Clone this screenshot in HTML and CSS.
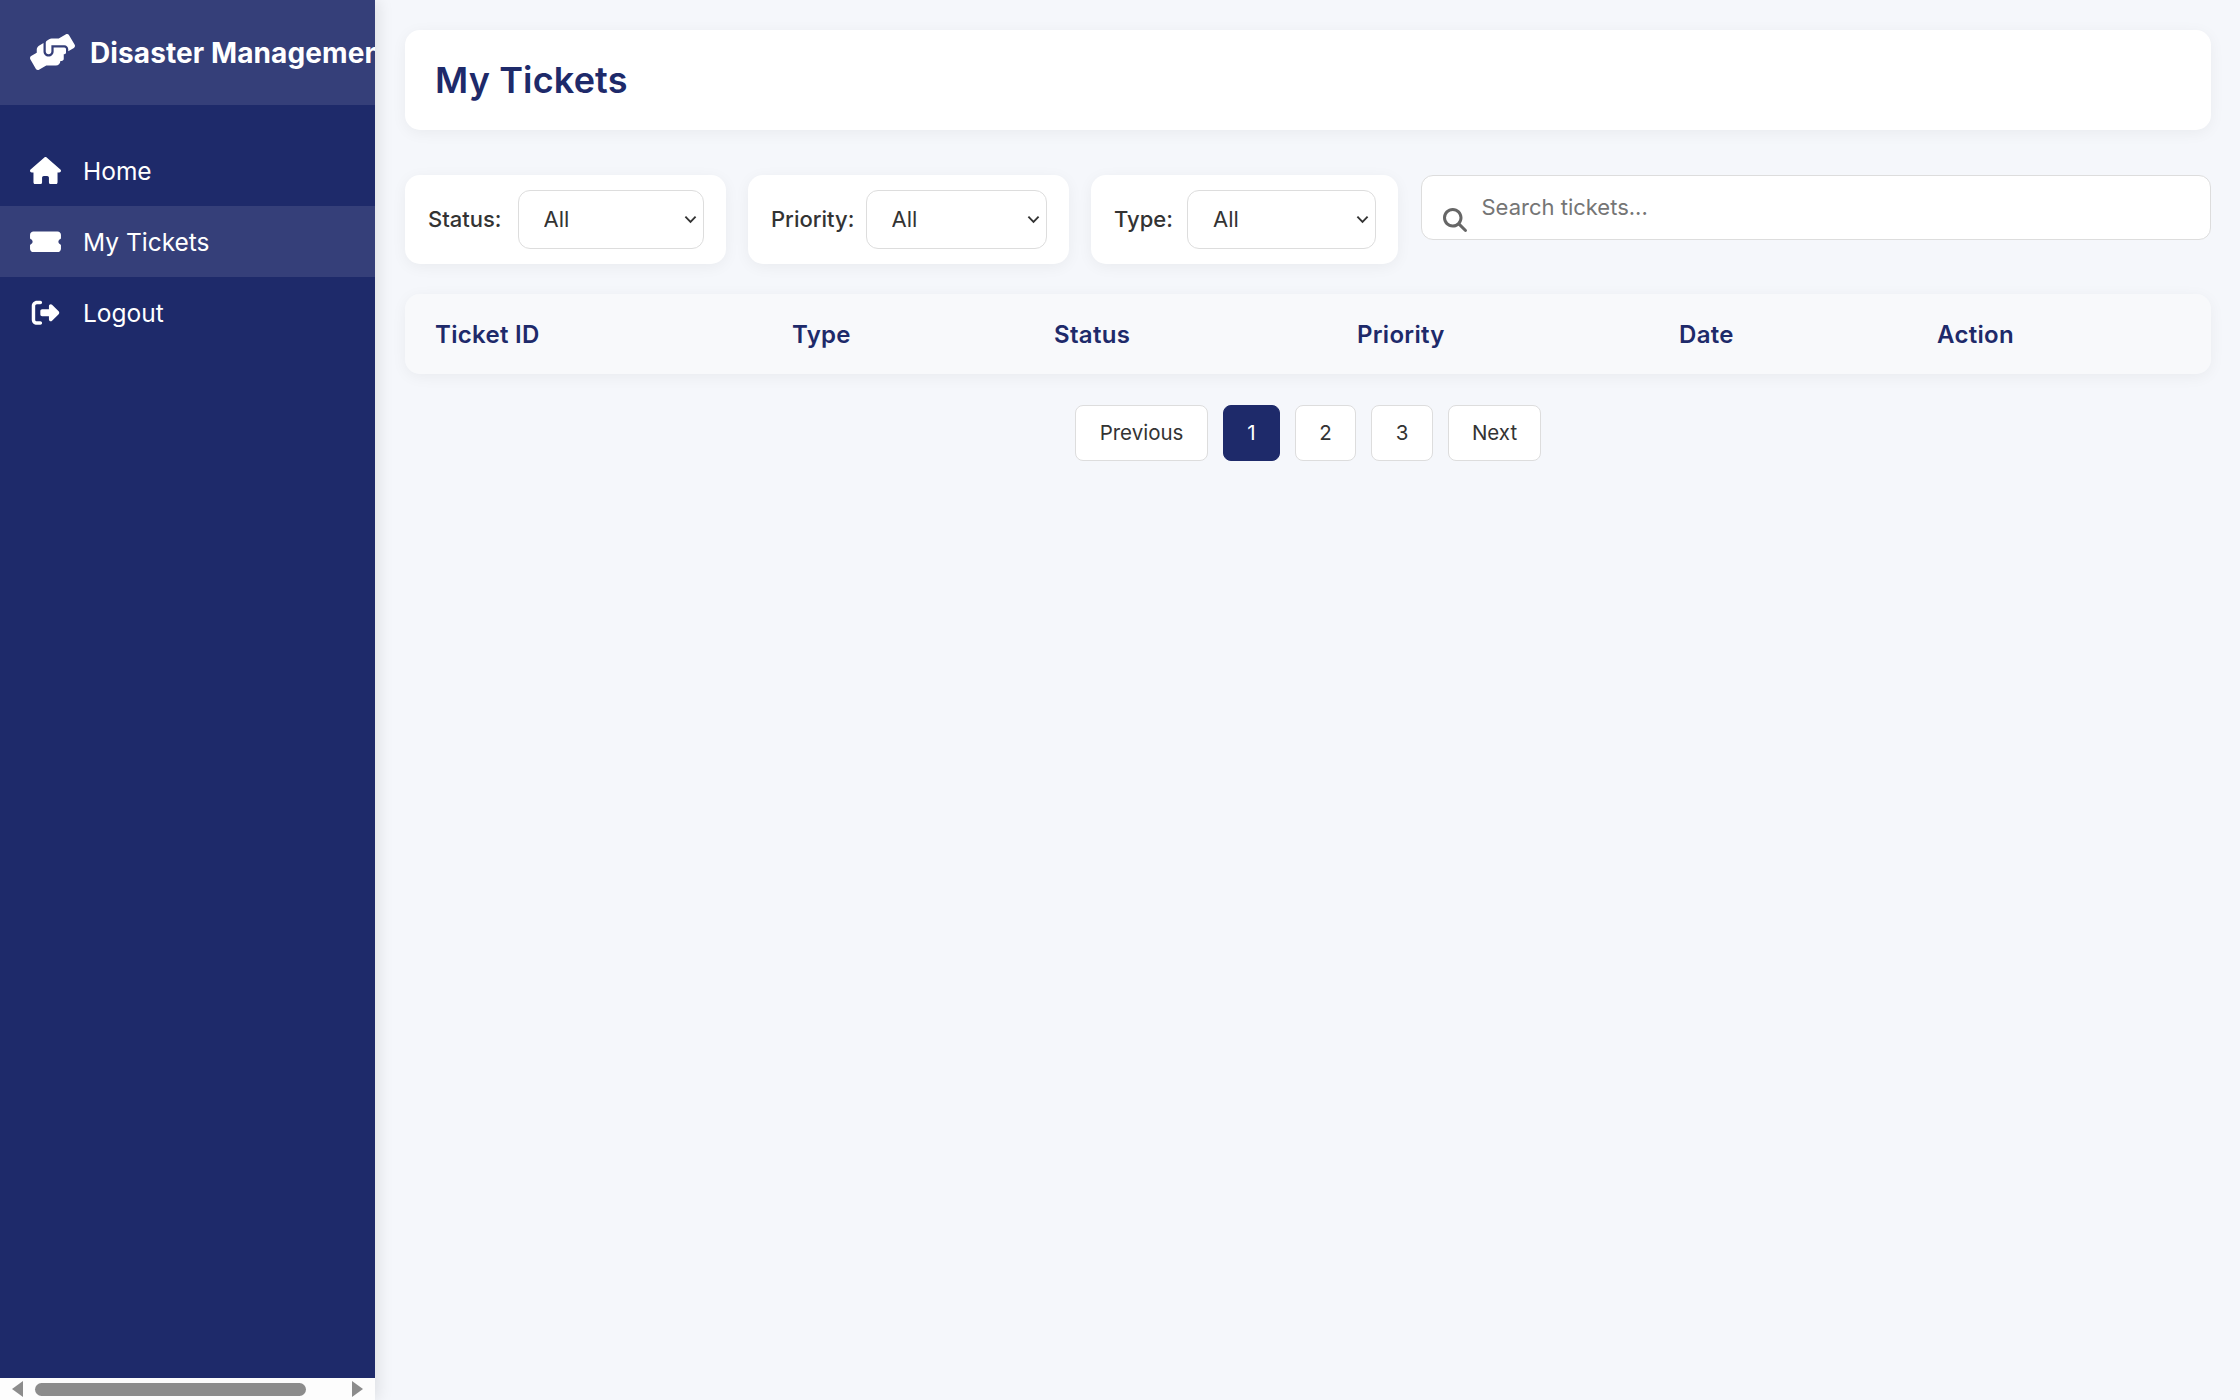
FILE: index.html
```html
<!DOCTYPE html>
<html lang="en">
<head>
<meta charset="utf-8">
<title>My Tickets</title>
<link rel="stylesheet" href="styles.css">
</head>
<body>
<div class="app">
  <aside class="sidebar">
    <div class="brand">
      <svg class="brand-icon" viewBox="0 0 640 512" aria-hidden="true"><path d="M488 192H336v56c0 39.7-32.3 72-72 72s-72-32.3-72-72V126.4l-64.9 39C107.8 176.9 96 197.8 96 220.2v47.3l-80 46.2C.7 322.5-4.6 342.1 4.3 357.4l80 138.6c8.8 15.3 28.4 20.5 43.7 11.7L231.4 448H368c35.3 0 64-28.7 64-64h16c17.7 0 32-14.3 32-32v-64h8c13.3 0 24-10.7 24-24v-48c0-13.3-10.7-24-24-24zm147.7-37.4L555.7 16C546.9.7 527.3-4.5 512 4.3L408.6 64H306.4c-12 0-23.7 3.4-33.9 9.7L239 94.6c-9.4 5.8-15 16.1-15 27.1V248c0 22.1 17.9 40 40 40s40-17.9 40-40v-88h184c30.9 0 56 25.1 56 56v28.5l80-46.2c15.3-8.9 20.5-28.4 11.7-43.7z"/></svg>
      <span class="brand-name">Disaster Management</span>
    </div>
    <nav class="nav">
      <a class="nav-item" href="#">
        <svg class="nav-icon" viewBox="0 0 576 512" aria-hidden="true"><path d="M575.8 255.5c0 18-15 32.1-32 32.1h-32l.7 160.2c0 2.7-.2 5.4-.5 8.1V472c0 22.1-17.9 40-40 40H456c-1.1 0-2.2 0-3.3-.1c-1.4 .1-2.8 .1-4.2 .1H416 392c-22.1 0-40-17.9-40-40V448 384c0-17.7-14.3-32-32-32H256c-17.7 0-32 14.3-32 32v64 24c0 22.1-17.9 40-40 40H160 128.1c-1.5 0-3-.1-4.5-.2c-1.2 .1-2.4 .2-3.6 .2H104c-22.1 0-40-17.9-40-40V360c0-.9 0-1.9 .1-2.8V287.6H32c-18 0-32-14-32-32.1c0-9 3-17 10-24L266.4 8c7-7 15-8 22-8s15 2 21 7L564.8 231.5c8 7 12 15 11 24z"/></svg>
        <span>Home</span>
      </a>
      <a class="nav-item nav-item-active" href="#">
        <svg class="nav-icon" viewBox="0 0 576 512" aria-hidden="true"><path d="M0 128C0 92.7 28.7 64 64 64H512c35.3 0 64 28.7 64 64v64c0 8.8-7.4 15.7-15.7 18.6C541.5 217.1 528 235 528 256s13.5 38.9 32.3 45.4c8.3 2.9 15.7 9.8 15.7 18.6v64c0 35.3-28.7 64-64 64H64c-35.3 0-64-28.7-64-64V320c0-8.8 7.4-15.7 15.7-18.6C34.5 294.9 48 277 48 256s-13.5-38.9-32.3-45.4C7.4 207.7 0 200.8 0 192V128z"/></svg>
        <span>My Tickets</span>
      </a>
      <a class="nav-item" href="#">
        <svg class="nav-icon" viewBox="0 0 512 512" aria-hidden="true"><path d="M377.9 105.9L500.7 228.7c7.2 7.2 11.3 17.1 11.3 27.3s-4.1 20.1-11.3 27.3L377.9 406.1c-6.4 6.4-15 9.9-24 9.9c-18.7 0-33.9-15.2-33.9-33.9l0-62.1-128 0c-17.7 0-32-14.3-32-32l0-64c0-17.7 14.3-32 32-32l128 0 0-62.1c0-18.7 15.2-33.9 33.9-33.9c9 0 17.6 3.6 24 9.9zM160 96L96 96c-17.7 0-32 14.3-32 32l0 256c0 17.7 14.3 32 32 32l64 0c17.7 0 32 14.3 32 32s-14.3 32-32 32l-64 0c-53 0-96-43-96-96L0 128C0 75 43 32 96 32l64 0c17.7 0 32 14.3 32 32s-14.3 32-32 32z"/></svg>
        <span>Logout</span>
      </a>
    </nav>
    <div class="hscroll" aria-hidden="true">
      <span class="hscroll-arrow hscroll-arrow-left"></span>
      <span class="hscroll-thumb"></span>
      <span class="hscroll-arrow hscroll-arrow-right"></span>
    </div>
  </aside>

  <main class="main">
    <header class="page-head">
      <h1 class="page-title">My Tickets</h1>
    </header>

    <section class="filters">
      <div class="filter-card">
        <label class="filter-label">Status:</label>
        <select class="filter-select filter-select-status"><option>All</option></select>
      </div>
      <div class="filter-card">
        <label class="filter-label">Priority:</label>
        <select class="filter-select filter-select-priority"><option>All</option></select>
      </div>
      <div class="filter-card">
        <label class="filter-label">Type:</label>
        <select class="filter-select filter-select-type"><option>All</option></select>
      </div>
      <div class="search">
        <svg class="search-icon" viewBox="0 0 512 512" aria-hidden="true"><path d="M416 208c0 45.900-14.900 88.300-40 122.700L502.600 457.400c12.500 12.500 12.500 32.800 0 45.300s-32.800 12.500-45.300 0L330.700 376c-34.400 25.200-76.800 40-122.700 40C93.100 416 0 322.900 0 208S93.100 0 208 0S416 93.100 416 208zM208 352a144 144 0 1 0 0-288 144 144 0 1 0 0 288z"/></svg>
        <input class="search-input" type="text" placeholder="Search tickets...">
      </div>
    </section>

    <table class="tickets">
      <colgroup>
        <col class="col-id"><col class="col-type"><col class="col-status"><col class="col-priority"><col class="col-date"><col class="col-action">
      </colgroup>
      <thead>
        <tr><th>Ticket ID</th><th>Type</th><th>Status</th><th>Priority</th><th>Date</th><th>Action</th></tr>
      </thead>
    </table>

    <nav class="pager">
      <button class="page-btn page-btn-prev">Previous</button>
      <button class="page-btn page-btn-current">1</button>
      <button class="page-btn">2</button>
      <button class="page-btn page-btn-three">3</button>
      <button class="page-btn page-btn-next">Next</button>
    </nav>
  </main>
</div>
</body>
</html>
```

FILE: styles.css
```css
* { box-sizing: border-box; }

html, body { height: 100%; }

body {
  margin: 0;
  background: #f5f7fb;
  color: #333;
  font-family: Inter, "Liberation Sans", sans-serif;
  overflow: hidden;
}

.app {
  display: flex;
  height: 1400px;
}

.sidebar {
  flex: 0 0 375px;
  display: flex;
  flex-direction: column;
  overflow: hidden;
  background: #1e2a6a;
  color: #fff;
  box-shadow: 3px 0 15px rgba(0, 0, 0, 0.1);
  position: relative;
}

.brand {
  flex: 0 0 105px;
  display: flex;
  align-items: center;
  gap: 15px;
  padding: 0 0 0 30px;
  background: #353f79;
  white-space: nowrap;
}

.brand-icon {
  flex: none;
  width: 45px;
  height: 36px;
  fill: #fff;
  margin-bottom: 2px;
}

.brand-name {
  font-size: 28px;
  font-weight: 700;
  letter-spacing: 0.1px;
}

.nav {
  flex: 1;
  padding-top: 30px;
}

.nav-item {
  display: flex;
  align-items: center;
  gap: 22px;
  height: 71px;
  padding-left: 30px;
  color: #fff;
  text-decoration: none;
  font-size: 24.5px;
}

.nav-item-active { background: #353f79; }

.nav-icon {
  flex: none;
  width: 31px;
  height: 27.5px;
  fill: #fff;
}

.hscroll {
  flex: 0 0 22px;
  display: flex;
  align-items: center;
  justify-content: space-between;
  padding: 0 12px;
  background: #fdfdfd;
}

.hscroll-thumb {
  width: 271px;
  height: 13px;
  margin-right: 35px;
  border-radius: 7px;
  background: #8c8c8c;
}

.hscroll-arrow {
  width: 0;
  height: 0;
  border-top: 8px solid transparent;
  border-bottom: 8px solid transparent;
}

.hscroll-arrow-left { border-right: 11px solid #8c8c8c; }
.hscroll-arrow-right { border-left: 11px solid #8c8c8c; }

.main {
  flex: 1;
  min-width: 0;
  padding: 30px 29px 30px 30px;
}

.page-head {
  height: 100px;
  display: flex;
  align-items: center;
  padding-left: 30px;
  background: #fff;
  border-radius: 15px;
  box-shadow: 0 3px 15px rgba(0, 0, 0, 0.05);
}

.page-title {
  margin: 0;
  font-size: 36px;
  font-weight: 600;
  letter-spacing: 0.15px;
  color: #1e2a6a;
}

.filters {
  display: grid;
  grid-template-columns: 320.5px 320.5px 307px 1fr;
  column-gap: 22.5px;
  align-items: start;
  margin-top: 45px;
}

.filter-card {
  display: flex;
  align-items: center;
  justify-content: space-between;
  height: 89px;
  padding: 0 22px 0 23px;
  background: #fff;
  border-radius: 15px;
  box-shadow: 0 3px 15px rgba(0, 0, 0, 0.05);
}

.filter-label {
  margin-bottom: 2px;
  font-size: 22px;
  font-weight: 500;
  color: #333;
}

.filter-select {
  appearance: none;
  height: 59px;
  padding: 0 0 2px 25px;
  background: #fff url("data:image/svg+xml,%3Csvg xmlns='http://www.w3.org/2000/svg' viewBox='0 0 14 9'%3E%3Cpath d='M1.500 1.500 7 7l5.500-5.500' fill='none' stroke='%23333' stroke-width='2'/%3E%3C/svg%3E") no-repeat right 6px center / 13px 9px;
  border: 1.5px solid #ddd;
  border-radius: 12px;
  color: #333;
  font: 400 22px Inter, "Liberation Sans", sans-serif;
}

.filter-select-status { width: 186px; }
.filter-select-priority { width: 181px; }
.filter-select-type { width: 189px; }

.search {
  position: relative;
}

.search-icon {
  position: absolute;
  left: 22.5px;
  top: 33px;
  width: 24px;
  height: 24px;
  fill: #666;
}

.search-input {
  display: block;
  width: 100%;
  height: 65px;
  padding: 0 22px 2px 60px;
  background: #fff;
  border: 1.5px solid #ddd;
  border-radius: 12px;
  font: 400 22px Inter, "Liberation Sans", sans-serif;
  color: #333;
  outline: none;
}

.search-input::placeholder { color: #757575; opacity: 1; }

.tickets {
  width: 100%;
  margin-top: 30px;
  table-layout: fixed;
  border-collapse: separate;
  border-spacing: 0;
  border-radius: 15px;
  box-shadow: 0 3px 15px rgba(0, 0, 0, 0.05);
}

.col-id { width: 357px; }
.col-type { width: 262px; }
.col-status { width: 303px; }
.col-priority { width: 322px; }
.col-date { width: 258px; }

.tickets th {
  height: 80px;
  padding: 0 0 0 30px;
  background: #f8f9fb;
  text-align: left;
  font-size: 24px;
  font-weight: 600;
  letter-spacing: 0.3px;
  color: #1e2a6a;
}

.tickets th:first-child { border-radius: 15px 0 0 15px; }
.tickets th:last-child { border-radius: 0 15px 15px 0; }

.pager {
  display: flex;
  justify-content: center;
  gap: 15px;
  margin-top: 31px;
}

.page-btn {
  width: 61px;
  height: 56px;
  padding: 0 0 1px;
  background: #fff;
  border: 1.5px solid #ddd;
  border-radius: 8px;
  color: #333;
  font: 400 20.5px Inter, "Liberation Sans", sans-serif;
}

.page-btn-prev { width: 133px; }
.page-btn-next { width: 93px; }
.page-btn-three { width: 62px; }

.page-btn-current {
  width: 57px;
  background: #1e2a6a;
  border-color: #1e2a6a;
  color: #fff;
}
```
